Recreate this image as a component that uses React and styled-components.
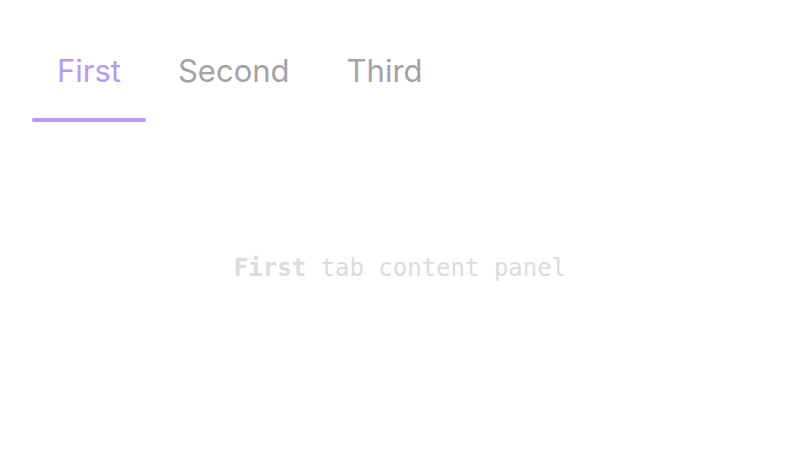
import React, { useState } from "react";
import styled, { createGlobalStyle } from "styled-components";

const GlobalStyle = createGlobalStyle`
  html, body {
    margin: 0;
    padding: 0;
    background: #ffffff;
  }
`;

const Page = styled.div`
  width: 800px;
  height: 450px;
  display: flex;
  flex-flow: column nowrap;
  padding: 32px 32px 0;
  box-sizing: border-box;
`;

const TabList = styled.div`
  display: flex;
  flex-flow: row nowrap;
  gap: 7px;
`;

const Tab = styled.button`
  position: relative;
  padding: 20px 25px 32px;
  border: none;
  background: none;
  cursor: pointer;
  font-family: Inter, "Noto Sans", sans-serif;
  font-size: 31px;
  font-weight: 400;
  line-height: 38px;
  color: ${(p) => (p.$active ? "#b799f7" : "#a3a3a3")};

  &::after {
    content: "";
    position: absolute;
    left: 0;
    right: 0;
    bottom: 0;
    height: 4px;
    border-radius: 2px;
    background: ${(p) => (p.$active ? "#b799f7" : "transparent")};
  }
`;

const Panel = styled.div`
  height: 292px;
  display: flex;
  align-items: center;
  justify-content: center;
  font-family: "DejaVu Sans Mono", monospace;
  font-size: 24px;
  color: #dcdcdc;
`;

const tabs = ["First", "Second", "Third"];

const App = () => {
  const [active, setActive] = useState(0);
  return (
    <>
      <GlobalStyle />
      <Page>
        <TabList>
          {tabs.map((t, i) => (
            <Tab key={t} $active={i === active} onClick={() => setActive(i)}>
              {t}
            </Tab>
          ))}
        </TabList>
        <Panel>
          <span>
            <b>{tabs[active]}</b> tab content panel
          </span>
        </Panel>
      </Page>
    </>
  );
};

export default App;
